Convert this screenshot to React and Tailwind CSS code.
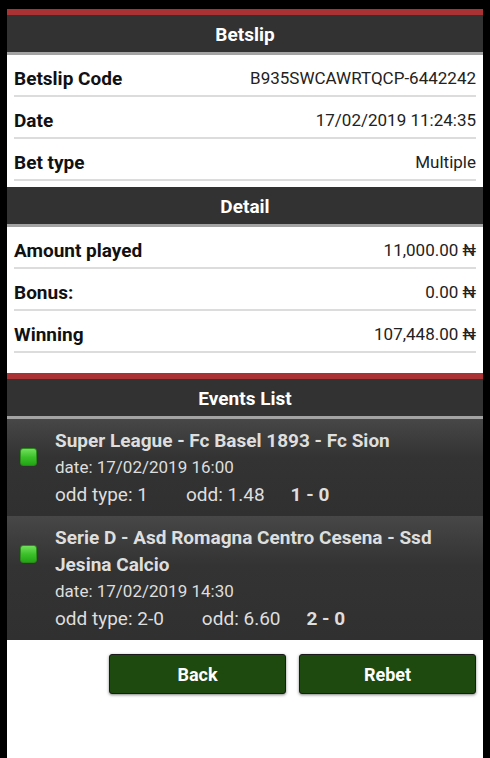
import React from 'react'

const font = { fontFamily: 'Roboto, "Noto Sans", sans-serif' }

const Row = ({ label, value }) => (
  <div className="mx-[7px] h-[42px] pt-[8px] flex items-center justify-between border-b-2 border-[#dcdcdc]">
    <span className="text-[19px] font-bold text-[#111]">{label}</span>
    <span className="text-[17px] text-[#222]">{value}</span>
  </div>
)

const Header = ({ title, red }) => (
  <div>
    {red && <div className="h-[6px] bg-[#a83234]"></div>}
    <div className="h-[37px] pt-[4px] bg-[#323232] flex items-center justify-center text-white text-[19px] font-bold">
      {title}
    </div>
    <div className="h-[3px] bg-[#a3a3a3]"></div>
  </div>
)

const events = [
  {
    title: 'Super League - Fc Basel 1893 - Fc Sion',
    date: '17/02/2019 16:00',
    type: '1',
    odd: '1.48',
    score: '1 - 0',
  },
  {
    title: 'Serie D - Asd Romagna Centro Cesena - Ssd Jesina Calcio',
    date: '17/02/2019 14:30',
    type: '2-0',
    odd: '6.60',
    score: '2 - 0',
  },
]

const App = () => {
  return (
    <div className="min-h-[758px] bg-black px-[7px] pt-[9px]" style={font}>
      <div className="bg-white min-h-[749px]">
        <Header title="Betslip" red />
        <Row label="Betslip Code" value="B935SWCAWRTQCP-6442242" />
        <Row label="Date" value="17/02/2019 11:24:35" />
        <Row label="Bet type" value="Multiple" />

        <div className="h-[6px]"></div>
        <Header title="Detail" />
        <Row label="Amount played" value="11,000.00 ₦" />
        <Row label="Bonus:" value="0.00 ₦" />
        <Row label="Winning" value="107,448.00 ₦" />

        <div className="h-[20px]"></div>
        <Header title="Events List" red />

        {events.map((ev, i) => (
          <div
            key={i}
            className="flex bg-gradient-to-b from-[#474747] via-[#333333] via-40% to-[#303030] pt-[8px] pb-[8px] pr-[10px]"
          >
            <div className="w-[48px] shrink-0 flex justify-start pl-[13px] pt-[21px]">
              <div className="w-[17px] h-[18px] rounded-[3px] border border-[#2a8a1a] bg-gradient-to-b from-[#6fe05a] via-[#3cc12a] to-[#22a615]"></div>
            </div>
            <div className="text-[#dedede] leading-[27px]">
              <div className="text-[19px] font-bold">{ev.title}</div>
              <div className="text-[17px]">date: {ev.date}</div>
              <div className="text-[19px]">
                <span className="mr-[38px]">odd type: {ev.type}</span>
                <span className="mr-[26px]">odd: {ev.odd}</span>
                <span className="font-bold">{ev.score}</span>
              </div>
            </div>
          </div>
        ))}

        <div className="flex justify-end gap-[13px] pr-[7px] pt-[14px]">
          <button className="w-[177px] h-[40px] rounded-[3px] border border-[#1a1a1a] bg-[#1e4a10] text-white text-[18px] font-bold shadow-[0_1px_3px_rgba(0,0,0,0.5)]">
            Back
          </button>
          <button className="w-[177px] h-[40px] rounded-[3px] border border-[#1a1a1a] bg-[#1e4a10] text-white text-[18px] font-bold shadow-[0_1px_3px_rgba(0,0,0,0.5)]">
            Rebet
          </button>
        </div>
      </div>
    </div>
  )
}

export default App
